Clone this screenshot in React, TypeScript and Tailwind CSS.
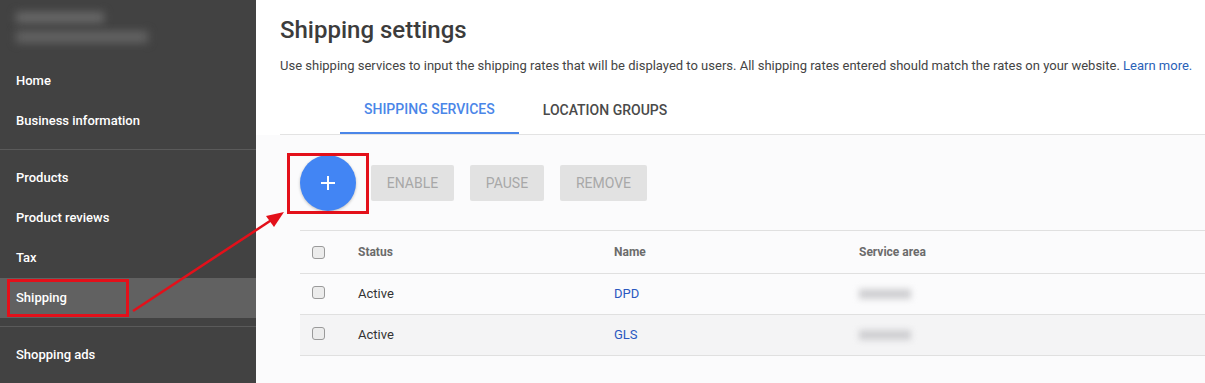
import React from 'react';

const navTop = ['Home', 'Business information'];
const navMid = ['Products', 'Product reviews', 'Tax', 'Shipping'];

const rows = [
  { status: 'Active', name: 'DPD', shaded: false },
  { status: 'Active', name: 'GLS', shaded: true },
];

function NavItem({ label, active }: { label: string; active?: boolean }) {
  return (
    <div className={`relative h-10 flex items-center px-4 text-[13px] font-medium text-white ${active ? 'bg-[#616161]' : ''}`}>
      {label}
      {active && <div className="absolute left-[7px] top-[1px] w-[122px] h-[38px] border-[3px] border-[#e3101a]" />}
    </div>
  );
}

function Checkbox() {
  return <div className="w-[13px] h-[13px] rounded-[3px] border border-[#9a9a9a] bg-[#ececec]" />;
}

export default function App() {
  return (
    <div className="relative flex w-[1205px] h-[383px] overflow-hidden bg-white" style={{ fontFamily: 'Roboto, "Liberation Sans", sans-serif' }}>
      {/* sidebar */}
      <aside className="w-[256px] shrink-0 bg-[#424242] flex flex-col">
        <div className="h-[61px] pl-4 pt-[12px] flex flex-col gap-[8px]">
          <div className="w-[88px] h-[11px] bg-[#686868] blur-[4px]" />
          <div className="w-[132px] h-[12px] bg-[#626262] blur-[4px]" />
        </div>
        {navTop.map((l) => <NavItem key={l} label={l} />)}
        <div className="my-2 h-px bg-[#5a5a5a]" />
        {navMid.map((l) => <NavItem key={l} label={l} active={l === 'Shipping'} />)}
        <div className="my-2 h-px bg-[#5a5a5a]" />
        <NavItem label="Shopping ads" />
      </aside>

      {/* main */}
      <main className="flex-1 min-w-0 flex flex-col">
        <div className="bg-white pl-6">
          <h1 className="pt-[15px] text-[24px] leading-[30px] font-medium text-[#3c3c3c]">Shipping settings</h1>
          <p className="mt-[12px] text-[13px] leading-[18px] text-[#444] whitespace-nowrap">
            Use shipping services to input the shipping rates that will be displayed to users. All shipping rates entered should match the rates on your website. <span className="text-[#2a62b8]">Learn more.</span>
          </p>
          <div className="mt-[12px] flex pl-[60px] border-b border-[#e3e3e3]">
            <div className="h-[47px] px-6 flex items-center text-[14px] font-medium text-[#4a86e8] border-b-2 border-[#4a86e8] -mb-px">SHIPPING SERVICES</div>
            <div className="h-[47px] px-6 flex items-center text-[14px] font-medium text-[#4a4a4a]">LOCATION GROUPS</div>
          </div>
        </div>

        <div className="flex-1 bg-[#fbfbfc] pl-[44px]">
          <div className="mt-[20px] flex items-center gap-[15px]">
            <div className="relative">
              <div className="w-[56px] h-[56px] rounded-full bg-[#4285f4] shadow-[0_1px_3px_rgba(0,0,0,0.25)] flex items-center justify-center">
                <svg width="16" height="16" viewBox="0 0 16 16">
                  <path d="M8 1v14M1 8h14" stroke="white" strokeWidth="2" />
                </svg>
              </div>
              <div className="absolute -left-[13px] -top-[2px] w-[82px] h-[61px] border-[3px] border-[#e3101a]" />
            </div>
            <div className="flex gap-4">
              <div className="w-[83px] h-[36px] rounded-[2px] bg-[#e2e2e2] flex items-center justify-center text-[14px] text-[#a8a8a8]">ENABLE</div>
              <div className="w-[74px] h-[36px] rounded-[2px] bg-[#e2e2e2] flex items-center justify-center text-[14px] text-[#a8a8a8]">PAUSE</div>
              <div className="w-[87px] h-[36px] rounded-[2px] bg-[#e2e2e2] flex items-center justify-center text-[14px] text-[#a8a8a8]">REMOVE</div>
            </div>
          </div>

          <div className="mt-[19px] border-t border-[#e0e0e0]">
            <div className="h-[43px] flex items-center border-b border-[#e0e0e0]">
              <div className="w-[58px] pl-3"><Checkbox /></div>
              <div className="w-[256px] text-[12px] font-bold text-[#6b6b6b]">Status</div>
              <div className="w-[245px] text-[12px] font-bold text-[#6b6b6b]">Name</div>
              <div className="text-[12px] font-bold text-[#6b6b6b]">Service area</div>
            </div>
            {rows.map((r) => (
              <div key={r.name} className={`h-[41px] flex items-center border-b border-[#e0e0e0] ${r.shaded ? 'bg-[#f4f4f5]' : ''}`}>
                <div className="w-[58px] pl-3 -mt-[3px]"><Checkbox /></div>
                <div className="w-[256px] text-[13px] text-[#333]">{r.status}</div>
                <div className="w-[245px] text-[13px] text-[#2a58c0]">{r.name}</div>
                <div className="w-[52px] h-[10px] bg-[#cfcfd2] blur-[3px]" />
              </div>
            ))}
          </div>
        </div>
      </main>

      {/* annotation arrow */}
      <svg className="absolute left-0 top-0 pointer-events-none" width="1205" height="383">
        <line x1="133" y1="311" x2="273" y2="219" stroke="#e3101a" strokeWidth="2.5" />
        <polygon points="284,212 266,216 274,227" fill="#e3101a" />
      </svg>
    </div>
  );
}
